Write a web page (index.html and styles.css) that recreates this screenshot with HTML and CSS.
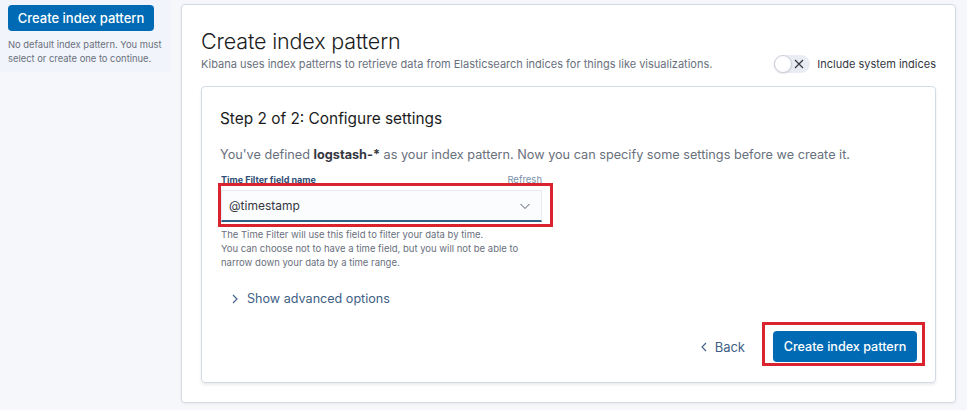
FILE: index.html
```html
<!DOCTYPE html>
<html>
<head>
<meta charset="utf-8">
<link rel="stylesheet" href="styles.css">
</head>
<body>
<div class="page">
  <aside class="sidebar">
    <button class="btn-primary side-btn">Create index pattern</button>
    <p class="side-note">No default index pattern. You must select or create one to continue.</p>
  </aside>
  <main class="panel">
    <div class="header">
      <div class="header-text">
        <h1 class="title">Create index pattern</h1>
        <p class="subtitle">Kibana uses index patterns to retrieve data from Elasticsearch indices for things like visualizations.</p>
      </div>
      <label class="toggle-row">
        <span class="switch"><span class="knob"></span><svg class="x" width="12" height="12" viewBox="0 0 12 12"><path d="M2 2 L10 10 M10 2 L2 10" stroke="#343741" stroke-width="1.2" fill="none"/></svg></span>
        <span class="toggle-label">Include system indices</span>
      </label>
    </div>
    <section class="inner">
      <h2 class="step">Step 2 of 2: Configure settings</h2>
      <p class="desc">You've defined <strong>logstash-*</strong> as your index pattern. Now you can specify some settings before we create it.</p>
      <div class="field">
        <div class="field-label-row">
          <span class="field-label">Time Filter field name</span>
          <span class="refresh">Refresh</span>
        </div>
        <div class="select">
          <span>@timestamp</span>
          <svg width="12" height="12" viewBox="0 0 12 12"><path d="M1.5 4 L6 8.5 L10.5 4" stroke="#535966" stroke-width="1" fill="none"/></svg>
        </div>
        <span class="mark mark-select"></span>
        <p class="help">The Time Filter will use this field to filter your data by time.<br>You can choose not to have a time field, but you will not be able to narrow down your data by a time range.</p>
      </div>
      <div class="advanced">
        <svg width="10" height="12" viewBox="0 0 10 12"><path d="M3 2 L7 6 L3 10" stroke="#3f5f85" stroke-width="1.1" fill="none"/></svg>
        <span>Show advanced options</span>
      </div>
      <div class="actions">
        <span class="back">
          <svg width="10" height="12" viewBox="0 0 10 12"><path d="M7 2 L3 6 L7 10" stroke="#3f5f85" stroke-width="1.1" fill="none"/></svg>
          Back
        </span>
        <span class="create-wrap">
          <button class="btn-primary create-btn">Create index pattern</button>
          <span class="mark mark-btn"></span>
        </span>
      </div>
    </section>
  </main>
</div>
</body>
</html>
```
FILE: styles.css
```css
* { box-sizing: border-box; }
html, body { margin: 0; padding: 0; }
body {
  background: #f5f7fa;
  font-family: Inter, "Noto Sans", "Liberation Sans", sans-serif;
  color: #343741;
  width: 967px;
  height: 410px;
  overflow: hidden;
}
.page {
  display: flex;
  align-items: flex-start;
  gap: 11px;
}
.sidebar {
  width: 170px;
  height: 72px;
  background: #f1f4fa;
  padding: 5px 2px 0 8px;
}
.btn-primary {
  background: #006bb4;
  color: #fff;
  border: none;
  border-radius: 4px;
  font-family: inherit;
  font-weight: 500;
  padding: 0;
  cursor: pointer;
}
.side-btn {
  width: 146px;
  height: 26px;
  font-size: 13px;
}
.side-note {
  margin: 7px 0 0 0;
  font-size: 9.4px;
  line-height: 14px;
  color: #69707d;
}
.panel {
  margin-top: 4px;
  width: 775px;
  height: 399px;
  background: #fff;
  border: 1px solid #d3dae6;
  border-radius: 4px;
  box-shadow: 0 1px 3px rgba(0,0,0,0.06);
  padding: 22px 19px 0 19px;
}
.header {
  display: flex;
  justify-content: space-between;
  align-items: flex-end;
}
.title {
  margin: 0;
  font-size: 21.5px;
  font-weight: 300;
  color: #1a1c21;
  line-height: 28px;
  letter-spacing: -0.15px;
}
.subtitle {
  margin: 1px 0 0 0;
  font-size: 11px;
  color: #69707d;
  line-height: 16px;
}
.toggle-row {
  display: flex;
  align-items: center;
  gap: 7px;
  margin-bottom: -1px;
}
.switch {
  position: relative;
  width: 36px;
  height: 18px;
  border-radius: 9px;
  background: #e9edf3;
  display: flex;
  align-items: center;
  justify-content: flex-end;
  padding-right: 5px;
}
.knob {
  position: absolute;
  left: 0;
  top: 0;
  width: 18px;
  height: 18px;
  border-radius: 50%;
  background: #fff;
  border: 1px solid #c9d0db;
  box-shadow: 0 1px 2px rgba(0,0,0,0.1);
}
.toggle-label {
  font-size: 11px;
  color: #343741;
}
.inner {
  margin-top: 14px;
  width: 735px;
  height: 297px;
  border: 1px solid #d3dae6;
  border-radius: 4px;
  box-shadow: 0 2px 3px rgba(0,0,0,0.08);
  padding: 21px 18px 0 18px;
  display: flex;
  flex-direction: column;
}
.step {
  margin: 0;
  font-size: 15.4px;
  font-weight: 400;
  color: #1a1c21;
  line-height: 22px;
}
.desc {
  margin: 16px 0 0 0;
  font-size: 12.7px;
  color: #69707d;
  line-height: 18px;
}
.desc strong { color: #343741; font-weight: 700; }
.field {
  position: relative;
  width: 321px;
  margin-top: 10px;
  margin-left: 1px;
}
.field-label-row {
  display: flex;
  justify-content: space-between;
  align-items: baseline;
  height: 14px;
}
.field-label {
  font-size: 9px;
  font-weight: 700;
  color: #2f4e73;
}
.refresh {
  font-size: 9.5px;
  color: #7b8fa8;
}
.select {
  margin-top: 2px;
  height: 32px;
  background: #fbfcfd;
  border: 1px solid #e6eaf0;
  border-bottom: 2px solid #2e5f85;
  display: flex;
  align-items: center;
  justify-content: space-between;
  padding: 0 10px 0 7px;
  font-size: 12px;
  color: #343741;
}
.mark {
  position: absolute;
  border: 3px solid #d9232e;
  pointer-events: none;
}
.mark-select {
  left: -3px;
  top: 9px;
  width: 335px;
  height: 44px;
}
.help {
  margin: 6px 0 0 0;
  font-size: 9.5px;
  line-height: 14px;
  color: #69707d;
}
.advanced {
  margin-top: 21px;
  margin-left: 10px;
  display: flex;
  align-items: center;
  gap: 7px;
  font-size: 12.6px;
  color: #3f5f85;
}
.actions {
  margin-top: auto;
  margin-bottom: 20px;
  display: flex;
  justify-content: flex-end;
  align-items: center;
  gap: 28px;
  padding-right: 0;
}
.back {
  display: flex;
  align-items: center;
  gap: 6px;
  font-size: 13px;
  color: #3f5f85;
}
.create-wrap {
  position: relative;
  display: flex;
}
.create-btn {
  width: 144px;
  height: 31px;
  font-size: 12.6px;
}
.mark-btn {
  left: -11px;
  top: -9px;
  width: 163px;
  height: 44px;
}
```
